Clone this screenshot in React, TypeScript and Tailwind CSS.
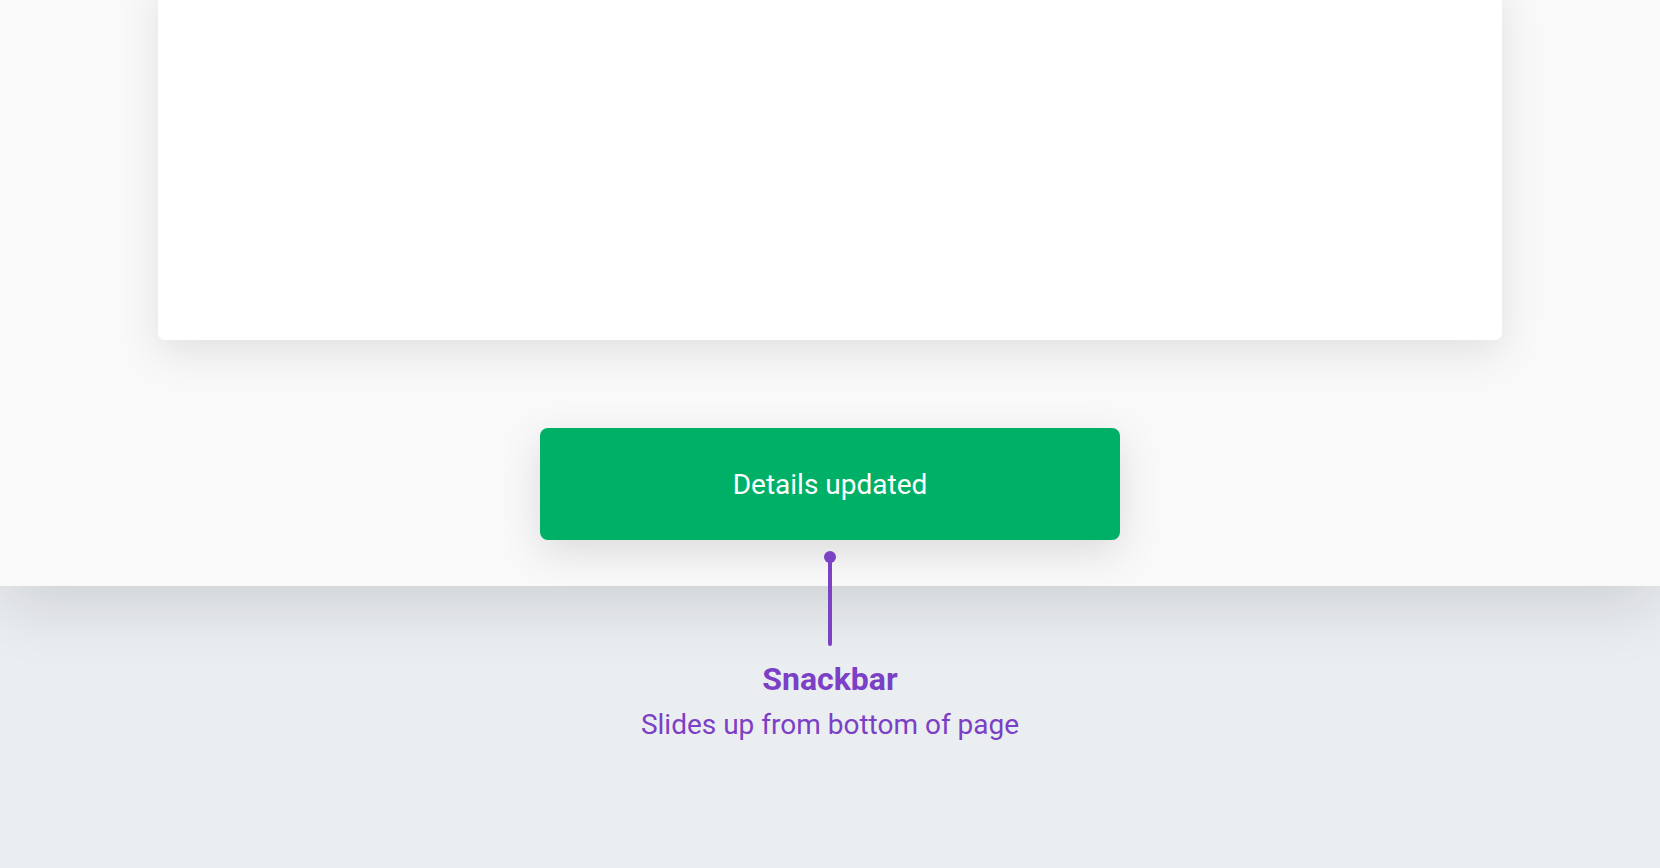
import React from "react";

export default function App() {
  return (
    <div
      className="w-[1660px] h-[868px] overflow-hidden flex flex-col bg-[#ebeef1]"
      style={{ fontFamily: "Roboto, 'Liberation Sans', sans-serif" }}
    >
      <div className="relative z-10 h-[586px] shrink-0 bg-[#f9f9f9] shadow-[0_20px_60px_rgba(0,0,0,0.12)] flex flex-col items-center">
        <div className="mt-[-20px] w-[1344px] h-[360px] shrink-0 bg-white rounded-[7px] shadow-[0_12px_40px_rgba(0,0,0,0.10)]" />
        <div className="mt-[88px] w-[580px] h-[112px] shrink-0 rounded-[8px] bg-[#00b066] shadow-[0_12px_40px_rgba(0,0,0,0.12)] flex items-center justify-center">
          <span className="text-white text-[28px] leading-none pt-[2px]">Details updated</span>
        </div>
      </div>
      <div className="flex flex-col items-center">
        <div className="relative z-20 mt-[-35px] flex flex-col items-center">
          <div className="w-[12px] h-[12px] rounded-full bg-[#7b42c6]" />
          <div className="w-[4px] h-[89px] mt-[-6px] rounded-b-full bg-[#7b42c6]" />
        </div>
        <div className="mt-[15px] text-[32px] leading-[37px] font-bold text-[#7b40c6]">Snackbar</div>
        <div className="mt-[10px] text-[28px] leading-[34px] text-[#7b40c6]">Slides up from bottom of page</div>
      </div>
    </div>
  );
}
